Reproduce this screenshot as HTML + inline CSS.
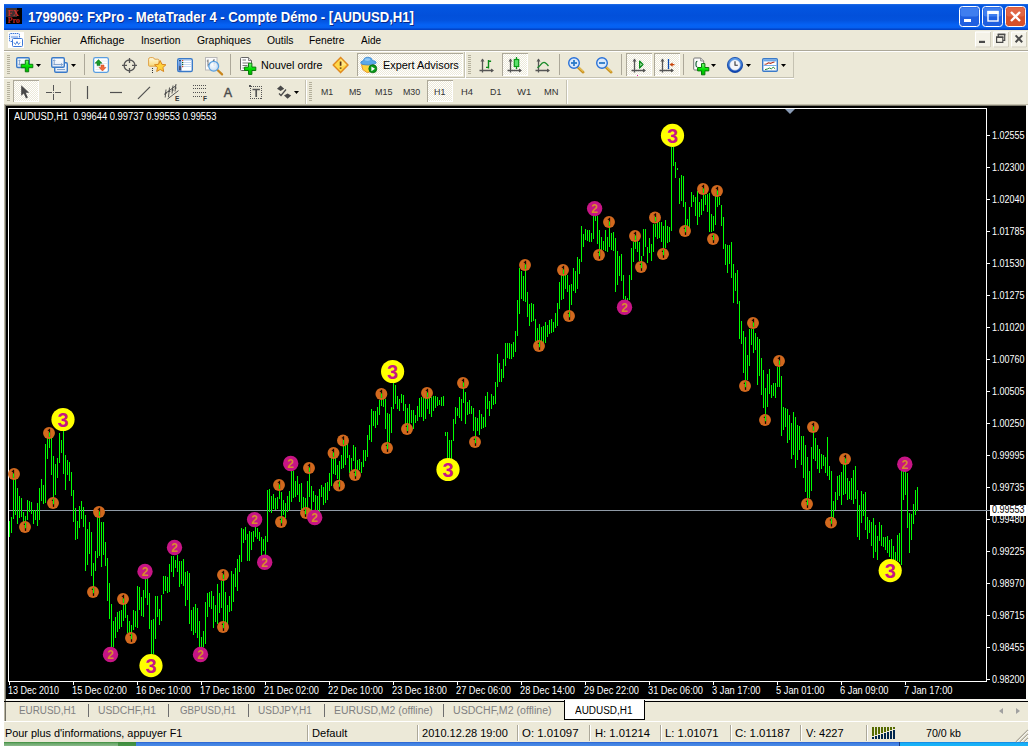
<!DOCTYPE html>
<html><head><meta charset="utf-8"><title>1799069: FxPro - MetaTrader 4</title>
<style>
html,body{margin:0;padding:0;background:#fff;}
body{width:1032px;height:746px;position:relative;overflow:hidden;font-family:"Liberation Sans",sans-serif;}
.a{position:absolute;white-space:nowrap;transform-origin:0 0;}
#win{left:4px;top:4px;width:1024px;height:738px;background:#ece9d8;}
#title{left:4px;top:4px;width:1024px;height:26px;background:linear-gradient(#2a75ea 0,#0a5ae0 1px,#0355e0 3px,#0250da 12px,#0352dd 16px,#0562f5 21px,#0560f0 23.5px,#0348d0 25px,#0240c0 26px);}
.tt{top:7.9px;font-size:14px;font-weight:bold;color:#fff;line-height:18px;text-shadow:1px 1px 0 #0a2a8a;}
.menu{top:32.5px;font-size:11px;color:#000;line-height:14px;}
.tb{font-size:11px;color:#000;line-height:14px;}
.tf{top:87px;font-size:9px;color:#333;line-height:11px;}
.cl{font-size:10px;color:#fff;line-height:10px;}
.tab{top:704px;font-size:10px;color:#808080;line-height:13px;}
.st{top:726px;font-size:11px;color:#000;line-height:14px;}
.pressed{background:conic-gradient(#fff 25%,#ece9d8 0 50%,#fff 0 75%,#ece9d8 0) 0 0/2px 2px;box-shadow:inset 1px 1px 0 #aca899,inset -1px -1px 0 #fff;}
</style></head><body>
<div class="a" id="win"></div>
<div class="a" id="title"></div>

<div class="a" style="left:4px;top:50px;width:1024px;height:1px;background:#aca899"></div>
<div class="a" style="left:4px;top:51px;width:1024px;height:1px;background:#fff"></div>
<div class="a" style="left:4px;top:77px;width:790px;height:1px;background:#c5c2b2"></div>
<div class="a" style="left:4px;top:78px;width:790px;height:1px;background:#fff"></div>
<div class="a" style="left:793px;top:52px;width:1px;height:26px;background:#c5c2b2"></div>
<div class="a" style="left:464px;top:52px;width:1px;height:26px;background:#c5c2b2"></div>
<div class="a" style="left:465px;top:52px;width:1px;height:26px;background:#fff"></div>
<div class="a" style="left:305px;top:80px;width:1px;height:24px;background:#c5c2b2"></div>
<div class="a" style="left:306px;top:80px;width:1px;height:24px;background:#fff"></div>
<div class="a" style="left:566px;top:80px;width:1px;height:24px;background:#c5c2b2"></div>
<div class="a" style="left:567px;top:80px;width:1px;height:24px;background:#fff"></div>
<div class="a" style="left:4px;top:104px;width:1024px;height:1px;background:#c4c0ae"></div>
<div class="a" style="left:5px;top:105px;width:1023px;height:1px;background:#7d7a6c"></div>
<div class="a pressed" style="left:13px;top:80px;width:26px;height:22px"></div>
<div class="a pressed" style="left:357px;top:53px;width:106px;height:23px"></div>
<div class="a pressed" style="left:502px;top:53px;width:26px;height:23px"></div>
<div class="a pressed" style="left:626px;top:53px;width:26px;height:23px"></div>
<div class="a pressed" style="left:654px;top:53px;width:26px;height:23px"></div>
<div class="a pressed" style="left:427px;top:80px;width:26px;height:22px"></div>
<div class="a" style="left:6px;top:106px;width:1020px;height:593px;background:#000"></div>
<div class="a" style="left:4px;top:104px;width:1px;height:617px;background:#bab6a4"></div>
<div class="a" style="left:5px;top:105px;width:1px;height:616px;background:#716f64"></div>
<div class="a" style="left:1026px;top:105px;width:2px;height:596px;background:#fdfdfb"></div>
<div class="a" style="left:990px;top:505px;width:36px;height:11px;background:#fff"></div>
<svg class="a" style="left:0;top:0" width="1032" height="746" viewBox="0 0 1032 746">
<g shape-rendering="crispEdges" fill="none" stroke="#fff" stroke-width="1">
<path d="M8.5 682 V108.5 H986.5 V682 M8 681.5 H987"/>
<path d="M987 135.5H990M987 167.5H990M987 199.5H990M987 231.5H990M987 263.5H990M987 295.5H990M987 327.5H990M987 359.5H990M987 391.5H990M987 423.5H990M987 455.5H990M987 487.5H990M987 519.5H990M987 551.5H990M987 583.5H990M987 615.5H990M987 647.5H990M987 679.5H990M9.5 682V685M73.5 682V685M137.5 682V685M201.5 682V685M265.5 682V685M329.5 682V685M393.5 682V685M457.5 682V685M521.5 682V685M585.5 682V685M649.5 682V685M713.5 682V685M777.5 682V685M841.5 682V685M905.5 682V685"/>
</g>
<path d="M9 510.5H990" stroke="#8f9aa6" stroke-width="1" shape-rendering="crispEdges"/>
<path d="M785 109H795L790 114Z" fill="#8a9bb5"/>
<path d="M9.5 521V537M11.5 517V533M13.5 474V519M15.5 479V515M17.5 488V524M19.5 496V518M21.5 498V517M23.5 512V524M25.5 516V528M27.5 500V520M29.5 501V512M31.5 502V514M33.5 510V524M35.5 510V520M37.5 503V526M39.5 488V520M41.5 479V501M43.5 485V504M45.5 444V503M47.5 433V459M49.5 433V448M51.5 438V475M53.5 456V504M55.5 464V495M57.5 458V478M59.5 433V463M61.5 440V453M63.5 431V474M65.5 455V490M67.5 460V475M69.5 462V481M71.5 472V496M73.5 490V522M75.5 508V540M77.5 521V539M79.5 506V528M81.5 501V519M83.5 507V527M85.5 515V571M87.5 529V565M89.5 522V554M91.5 532V576M93.5 563V587M95.5 551V571M97.5 517V558M99.5 512V556M101.5 522V567M103.5 522V555M105.5 542V566M107.5 558V601M109.5 583V619M111.5 604V647M113.5 621V647M115.5 617V638M117.5 612V632M119.5 611V629M121.5 610V627M123.5 604V621M125.5 604V618M127.5 615V633M129.5 621V633M131.5 625V638M133.5 610V630M135.5 611V627M137.5 586V628M139.5 587V610M141.5 597V616M143.5 590V617M145.5 578V598M147.5 578V605M149.5 593V629M151.5 620V654M153.5 619V654M155.5 596V639M157.5 596V617M159.5 609V625M161.5 595V621M163.5 576V594M165.5 576V591M167.5 577V593M169.5 564V592M171.5 556V572M173.5 556V577M175.5 560V568M177.5 555V572M179.5 561V587M181.5 561V584M183.5 559V586M185.5 572V606M187.5 571V600M189.5 573V624M191.5 610V631M193.5 607V635M195.5 604V633M197.5 608V638M199.5 621V647M201.5 637V647M203.5 631V647M205.5 602V644M207.5 593V617M209.5 592V607M211.5 591V609M213.5 596V628M215.5 605V622M217.5 584V624M219.5 593V613M221.5 581V608M223.5 575V627M225.5 592V624M227.5 605V624M229.5 596V612M231.5 571V611M233.5 574V602M235.5 568V587M237.5 559V591M239.5 555V572M241.5 528V562M243.5 529V543M245.5 527V540M247.5 534V561M249.5 531V561M251.5 532V550M253.5 531V542M255.5 527V537M257.5 528V539M259.5 532V541M261.5 537V556M263.5 539V551M265.5 536V556M267.5 490V542M269.5 489V512M271.5 496V513M273.5 494V509M275.5 498V510M277.5 497V509M279.5 491V499M281.5 492V520M283.5 500V515M285.5 503V518M287.5 496V512M289.5 491V510M291.5 471V502M293.5 471V498M295.5 481V497M297.5 476V495M299.5 484V502M301.5 483V510M303.5 497V510M305.5 498V507M307.5 481V510M309.5 473V497M311.5 486V510M313.5 491V502M315.5 495V510M317.5 496V512M319.5 489V512M321.5 485V497M323.5 487V505M325.5 483V503M327.5 482V500M329.5 473V491M331.5 456V486M333.5 456V474M335.5 458V475M337.5 465V479M339.5 461V480M341.5 455V469M343.5 441V468M345.5 446V465M347.5 444V458M349.5 455V473M351.5 458V470M353.5 445V461M355.5 447V472M357.5 460V472M359.5 459V470M361.5 462V473M363.5 450V467M365.5 450V461M367.5 435V457M369.5 425V440M371.5 409V442M373.5 411V426M375.5 411V428M377.5 407V425M379.5 400V415M381.5 394V406M383.5 399V407M385.5 399V429M387.5 413V448M389.5 414V442M391.5 407V433M393.5 383V409M395.5 385V404M397.5 396V409M399.5 399V411M401.5 394V403M403.5 395V411M405.5 404V429M407.5 408V431M409.5 404V425M411.5 410V423M413.5 410V429M415.5 415V423M417.5 406V421M419.5 398V417M421.5 397V417M423.5 398V421M425.5 397V419M427.5 399V409M429.5 398V414M431.5 397V417M433.5 396V411M435.5 396V408M437.5 397V406M439.5 400V405M441.5 397V406M443.5 396V406M445.5 432V436M447.5 432V459M449.5 440V459M451.5 440V459M453.5 419V441M455.5 407V424M457.5 408V416M459.5 397V418M461.5 399V421M463.5 383V403M465.5 392V424M467.5 402V415M469.5 400V414M471.5 406V414M473.5 408V431M475.5 417V436M477.5 418V431M479.5 410V435M481.5 414V429M483.5 417V428M485.5 396V427M487.5 392V409M489.5 401V416M491.5 394V409M493.5 396V405M495.5 382V404M497.5 354V387M499.5 363V382M501.5 369V382M503.5 359V378M505.5 343V366M507.5 343V358M509.5 343V359M511.5 344V359M513.5 342V357M515.5 331V352M517.5 300V336M519.5 268V314M521.5 271V299M523.5 276V301M525.5 266V302M527.5 292V317M529.5 304V326M531.5 303V322M533.5 304V321M535.5 319V341M537.5 328V341M539.5 324V342M541.5 327V343M543.5 326V343M545.5 322V343M547.5 325V337M549.5 320V334M551.5 319V333M553.5 322V332M555.5 313V328M557.5 303V326M559.5 282V309M561.5 275V300M563.5 274V299M565.5 275V289M567.5 275V292M569.5 285V311M571.5 284V305M573.5 268V291M575.5 271V293M577.5 257V289M579.5 259V274M581.5 226V262M583.5 234V247M585.5 229V240M587.5 230V241M589.5 230V242M591.5 233V242M593.5 216V239M595.5 216V221M597.5 216V244M599.5 230V249M601.5 237V254M603.5 241V250M605.5 230V251M607.5 237V252M609.5 227V247M611.5 233V250M613.5 232V251M615.5 238V292M617.5 251V285M619.5 256V276M621.5 254V281M623.5 275V299M625.5 296V300M627.5 298V301M629.5 275V300M631.5 248V280M633.5 242V262M635.5 241V249M637.5 241V252M639.5 242V261M641.5 256V262M643.5 229V256M645.5 229V247M647.5 247V263M649.5 238V253M651.5 244V261M653.5 224V252M655.5 224V237M657.5 222V239M659.5 222V238M661.5 222V242M663.5 226V249M665.5 220V248M667.5 226V243M669.5 227V242M671.5 147V231M673.5 147V166M675.5 162V178M677.5 168V170M679.5 178V204M681.5 175V201M683.5 176V207M685.5 202V231M687.5 219V231M689.5 207V231M691.5 192V207M693.5 195V202M695.5 197V216M697.5 191V225M699.5 202V217M701.5 199V215M703.5 195V211M705.5 195V205M707.5 194V212M709.5 193V232M711.5 214V232M713.5 216V231M715.5 196V225M717.5 196V207M719.5 197V205M721.5 205V226M723.5 217V249M725.5 244V265M727.5 245V273M729.5 245V264M731.5 242V278M733.5 264V303M735.5 273V291M737.5 270V304M739.5 301V339M741.5 321V344M743.5 331V373M745.5 337V380M747.5 355V380M749.5 329V366M751.5 329V345M753.5 329V353M755.5 333V350M757.5 337V385M759.5 339V376M761.5 358V395M763.5 370V408M765.5 388V414M767.5 374V407M769.5 369V394M771.5 385V398M773.5 383V396M775.5 383V398M777.5 367V387M779.5 366V387M781.5 376V436M783.5 407V430M785.5 408V427M787.5 409V443M789.5 415V440M791.5 423V459M793.5 412V455M795.5 417V468M797.5 425V460M799.5 426V450M801.5 436V465M803.5 436V478M805.5 445V492M807.5 457V498M809.5 471V498M811.5 447V491M813.5 431V459M815.5 438V461M817.5 445V469M819.5 449V473M821.5 454V469M823.5 455V466M825.5 457V473M827.5 437V476M829.5 466V480M831.5 471V518M833.5 501V518M835.5 492V510M837.5 476V500M839.5 475V496M841.5 472V505M843.5 464V495M845.5 464V494M847.5 478V500M849.5 481V499M851.5 478V500M853.5 470V504M855.5 466V499M857.5 490V537M859.5 505V540M861.5 491V523M863.5 494V516M865.5 492V530M867.5 517V539M869.5 520V533M871.5 522V546M873.5 518V558M875.5 525V552M877.5 536V560M879.5 522V541M881.5 525V546M883.5 537V547M885.5 537V550M887.5 536V553M889.5 540V557M891.5 539V560M893.5 546V560M895.5 552V560M897.5 535V561M899.5 533V562M901.5 471V565M903.5 471V500M905.5 471V495M907.5 473V528M909.5 513V553M911.5 514V540M913.5 504V524M915.5 490V515M917.5 487V511" stroke="#00ff00" stroke-width="1" fill="none" shape-rendering="crispEdges"/>
<circle cx="14" cy="474" r="5.95" fill="#d2691e"/><rect x="12.85" y="469.8" width="1.3" height="8.1" fill="#160800"/><rect x="11.8" y="470.8" width="1.2" height="1.1" fill="#160800"/><rect x="13" y="473.4" width="1" height="4.5" fill="#00ff00"/>
<circle cx="25" cy="527" r="5.95" fill="#d2691e"/><rect x="24.85" y="522.8" width="1.3" height="8.1" fill="#160800"/><rect x="23.8" y="523.8" width="1.2" height="1.1" fill="#160800"/><rect x="25" y="522.8" width="1" height="5.4" fill="#00ff00"/>
<circle cx="49" cy="433" r="5.95" fill="#d2691e"/><rect x="48.85" y="428.8" width="1.3" height="8.1" fill="#160800"/><rect x="47.8" y="429.8" width="1.2" height="1.1" fill="#160800"/><rect x="49" y="432.4" width="1" height="4.5" fill="#00ff00"/>
<circle cx="53" cy="503" r="5.95" fill="#d2691e"/><rect x="52.85" y="498.8" width="1.3" height="8.1" fill="#160800"/><rect x="51.8" y="499.8" width="1.2" height="1.1" fill="#160800"/><rect x="53" y="498.8" width="1" height="5.4" fill="#00ff00"/>
<circle cx="99" cy="512" r="5.95" fill="#d2691e"/><rect x="98.85" y="507.8" width="1.3" height="8.1" fill="#160800"/><rect x="97.8" y="508.8" width="1.2" height="1.1" fill="#160800"/><rect x="99" y="511.4" width="1" height="4.5" fill="#00ff00"/>
<circle cx="93" cy="592" r="5.95" fill="#d2691e"/><rect x="92.85" y="587.8" width="1.3" height="8.1" fill="#160800"/><rect x="91.8" y="588.8" width="1.2" height="1.1" fill="#160800"/><rect x="93" y="587.8" width="1" height="5.4" fill="#00ff00"/>
<circle cx="123" cy="599" r="5.95" fill="#d2691e"/><rect x="122.85" y="594.8" width="1.3" height="8.1" fill="#160800"/><rect x="121.8" y="595.8" width="1.2" height="1.1" fill="#160800"/><rect x="123" y="598.4" width="1" height="4.5" fill="#00ff00"/>
<circle cx="131" cy="638" r="5.95" fill="#d2691e"/><rect x="130.85" y="633.8" width="1.3" height="8.1" fill="#160800"/><rect x="129.8" y="634.8" width="1.2" height="1.1" fill="#160800"/><rect x="131" y="633.8" width="1" height="5.4" fill="#00ff00"/>
<circle cx="223" cy="575" r="5.95" fill="#d2691e"/><rect x="222.85" y="570.8" width="1.3" height="8.1" fill="#160800"/><rect x="221.8" y="571.8" width="1.2" height="1.1" fill="#160800"/><rect x="223" y="574.4" width="1" height="4.5" fill="#00ff00"/>
<circle cx="223" cy="627" r="5.95" fill="#d2691e"/><rect x="222.85" y="622.8" width="1.3" height="8.1" fill="#160800"/><rect x="221.8" y="623.8" width="1.2" height="1.1" fill="#160800"/><rect x="223" y="622.8" width="1" height="5.4" fill="#00ff00"/>
<circle cx="279" cy="485" r="5.95" fill="#d2691e"/><rect x="278.85" y="480.8" width="1.3" height="8.1" fill="#160800"/><rect x="277.8" y="481.8" width="1.2" height="1.1" fill="#160800"/><rect x="279" y="484.4" width="1" height="4.5" fill="#00ff00"/>
<circle cx="281" cy="522" r="5.95" fill="#d2691e"/><rect x="280.85" y="517.8" width="1.3" height="8.1" fill="#160800"/><rect x="279.8" y="518.8" width="1.2" height="1.1" fill="#160800"/><rect x="281" y="517.8" width="1" height="5.4" fill="#00ff00"/>
<circle cx="309" cy="468" r="5.95" fill="#d2691e"/><rect x="308.85" y="463.8" width="1.3" height="8.1" fill="#160800"/><rect x="307.8" y="464.8" width="1.2" height="1.1" fill="#160800"/><rect x="309" y="467.4" width="1" height="4.5" fill="#00ff00"/>
<circle cx="306" cy="513" r="5.95" fill="#d2691e"/><rect x="304.85" y="508.8" width="1.3" height="8.1" fill="#160800"/><rect x="303.8" y="509.8" width="1.2" height="1.1" fill="#160800"/><rect x="305" y="508.8" width="1" height="5.4" fill="#00ff00"/>
<circle cx="333.5" cy="453" r="5.95" fill="#d2691e"/><rect x="332.85" y="448.8" width="1.3" height="8.1" fill="#160800"/><rect x="331.8" y="449.8" width="1.2" height="1.1" fill="#160800"/><rect x="333" y="452.4" width="1" height="4.5" fill="#00ff00"/>
<circle cx="339" cy="485.6" r="5.95" fill="#d2691e"/><rect x="338.85" y="481.4" width="1.3" height="8.1" fill="#160800"/><rect x="337.8" y="482.4" width="1.2" height="1.1" fill="#160800"/><rect x="339" y="481.4" width="1" height="5.4" fill="#00ff00"/>
<circle cx="343" cy="440.5" r="5.95" fill="#d2691e"/><rect x="342.85" y="436.3" width="1.3" height="8.1" fill="#160800"/><rect x="341.8" y="437.3" width="1.2" height="1.1" fill="#160800"/><rect x="343" y="439.9" width="1" height="4.5" fill="#00ff00"/>
<circle cx="355" cy="475" r="5.95" fill="#d2691e"/><rect x="354.85" y="470.8" width="1.3" height="8.1" fill="#160800"/><rect x="353.8" y="471.8" width="1.2" height="1.1" fill="#160800"/><rect x="355" y="470.8" width="1" height="5.4" fill="#00ff00"/>
<circle cx="381.4" cy="394" r="5.95" fill="#d2691e"/><rect x="380.85" y="389.8" width="1.3" height="8.1" fill="#160800"/><rect x="379.8" y="390.8" width="1.2" height="1.1" fill="#160800"/><rect x="381" y="393.4" width="1" height="4.5" fill="#00ff00"/>
<circle cx="387" cy="448" r="5.95" fill="#d2691e"/><rect x="386.85" y="443.8" width="1.3" height="8.1" fill="#160800"/><rect x="385.8" y="444.8" width="1.2" height="1.1" fill="#160800"/><rect x="387" y="443.8" width="1" height="5.4" fill="#00ff00"/>
<circle cx="407" cy="429" r="5.95" fill="#d2691e"/><rect x="406.85" y="424.8" width="1.3" height="8.1" fill="#160800"/><rect x="405.8" y="425.8" width="1.2" height="1.1" fill="#160800"/><rect x="407" y="424.8" width="1" height="6.2" fill="#00ff00"/>
<circle cx="427" cy="393" r="5.95" fill="#d2691e"/><rect x="426.85" y="388.8" width="1.3" height="8.1" fill="#160800"/><rect x="425.8" y="389.8" width="1.2" height="1.1" fill="#160800"/><rect x="427" y="392.4" width="1" height="4.5" fill="#00ff00"/>
<circle cx="463" cy="383" r="5.95" fill="#d2691e"/><rect x="462.85" y="378.8" width="1.3" height="8.1" fill="#160800"/><rect x="461.8" y="379.8" width="1.2" height="1.1" fill="#160800"/><rect x="463" y="382.4" width="1" height="4.5" fill="#00ff00"/>
<circle cx="475" cy="442" r="5.95" fill="#d2691e"/><rect x="474.85" y="437.8" width="1.3" height="8.1" fill="#160800"/><rect x="473.8" y="438.8" width="1.2" height="1.1" fill="#160800"/><rect x="475" y="437.8" width="1" height="5.4" fill="#00ff00"/>
<circle cx="525" cy="265" r="5.95" fill="#d2691e"/><rect x="524.85" y="260.8" width="1.3" height="8.1" fill="#160800"/><rect x="523.8" y="261.8" width="1.2" height="1.1" fill="#160800"/><rect x="525" y="264.4" width="1" height="4.5" fill="#00ff00"/>
<circle cx="539" cy="346" r="5.95" fill="#d2691e"/><rect x="538.85" y="341.8" width="1.3" height="8.1" fill="#160800"/><rect x="537.8" y="342.8" width="1.2" height="1.1" fill="#160800"/><rect x="539" y="341.8" width="1" height="5.4" fill="#00ff00"/>
<circle cx="563" cy="270" r="5.95" fill="#d2691e"/><rect x="562.85" y="265.8" width="1.3" height="8.1" fill="#160800"/><rect x="561.8" y="266.8" width="1.2" height="1.1" fill="#160800"/><rect x="563" y="269.4" width="1" height="4.5" fill="#00ff00"/>
<circle cx="569" cy="316" r="5.95" fill="#d2691e"/><rect x="568.85" y="311.8" width="1.3" height="8.1" fill="#160800"/><rect x="567.8" y="312.8" width="1.2" height="1.1" fill="#160800"/><rect x="569" y="311.8" width="1" height="5.4" fill="#00ff00"/>
<circle cx="599" cy="255" r="5.95" fill="#d2691e"/><rect x="598.85" y="250.8" width="1.3" height="8.1" fill="#160800"/><rect x="597.8" y="251.8" width="1.2" height="1.1" fill="#160800"/><rect x="599" y="250.8" width="1" height="5.4" fill="#00ff00"/>
<circle cx="609" cy="222" r="5.95" fill="#d2691e"/><rect x="608.85" y="217.8" width="1.3" height="8.1" fill="#160800"/><rect x="607.8" y="218.8" width="1.2" height="1.1" fill="#160800"/><rect x="609" y="221.4" width="1" height="4.5" fill="#00ff00"/>
<circle cx="635" cy="236" r="5.95" fill="#d2691e"/><rect x="634.85" y="231.8" width="1.3" height="8.1" fill="#160800"/><rect x="633.8" y="232.8" width="1.2" height="1.1" fill="#160800"/><rect x="635" y="235.4" width="1" height="4.5" fill="#00ff00"/>
<circle cx="641" cy="267" r="5.95" fill="#d2691e"/><rect x="640.85" y="262.8" width="1.3" height="8.1" fill="#160800"/><rect x="639.8" y="263.8" width="1.2" height="1.1" fill="#160800"/><rect x="641" y="262.8" width="1" height="5.4" fill="#00ff00"/>
<circle cx="655" cy="217.5" r="5.95" fill="#d2691e"/><rect x="654.85" y="213.3" width="1.3" height="8.1" fill="#160800"/><rect x="653.8" y="214.3" width="1.2" height="1.1" fill="#160800"/><rect x="655" y="216.9" width="1" height="4.5" fill="#00ff00"/>
<circle cx="663" cy="254" r="5.95" fill="#d2691e"/><rect x="662.85" y="249.8" width="1.3" height="8.1" fill="#160800"/><rect x="661.8" y="250.8" width="1.2" height="1.1" fill="#160800"/><rect x="663" y="249.8" width="1" height="5.4" fill="#00ff00"/>
<circle cx="685" cy="231" r="5.95" fill="#d2691e"/><rect x="684.85" y="226.8" width="1.3" height="8.1" fill="#160800"/><rect x="683.8" y="227.8" width="1.2" height="1.1" fill="#160800"/><rect x="685" y="226.8" width="1" height="5.4" fill="#00ff00"/>
<circle cx="703" cy="189" r="5.95" fill="#d2691e"/><rect x="702.85" y="184.8" width="1.3" height="8.1" fill="#160800"/><rect x="701.8" y="185.8" width="1.2" height="1.1" fill="#160800"/><rect x="703" y="188.4" width="1" height="4.5" fill="#00ff00"/>
<circle cx="717" cy="191" r="5.95" fill="#d2691e"/><rect x="716.85" y="186.8" width="1.3" height="8.1" fill="#160800"/><rect x="715.8" y="187.8" width="1.2" height="1.1" fill="#160800"/><rect x="717" y="190.4" width="1" height="4.5" fill="#00ff00"/>
<circle cx="713" cy="239" r="5.95" fill="#d2691e"/><rect x="712.85" y="234.8" width="1.3" height="8.1" fill="#160800"/><rect x="711.8" y="235.8" width="1.2" height="1.1" fill="#160800"/><rect x="713" y="234.8" width="1" height="5.4" fill="#00ff00"/>
<circle cx="745" cy="386" r="5.95" fill="#d2691e"/><rect x="744.85" y="381.8" width="1.3" height="8.1" fill="#160800"/><rect x="743.8" y="382.8" width="1.2" height="1.1" fill="#160800"/><rect x="745" y="381.8" width="1" height="5.4" fill="#00ff00"/>
<circle cx="753" cy="323" r="5.95" fill="#d2691e"/><rect x="752.85" y="318.8" width="1.3" height="8.1" fill="#160800"/><rect x="751.8" y="319.8" width="1.2" height="1.1" fill="#160800"/><rect x="753" y="322.4" width="1" height="4.5" fill="#00ff00"/>
<circle cx="779" cy="361" r="5.95" fill="#d2691e"/><rect x="778.85" y="356.8" width="1.3" height="8.1" fill="#160800"/><rect x="777.8" y="357.8" width="1.2" height="1.1" fill="#160800"/><rect x="779" y="360.4" width="1" height="4.5" fill="#00ff00"/>
<circle cx="765" cy="420" r="5.95" fill="#d2691e"/><rect x="764.85" y="415.8" width="1.3" height="8.1" fill="#160800"/><rect x="763.8" y="416.8" width="1.2" height="1.1" fill="#160800"/><rect x="765" y="415.8" width="1" height="5.4" fill="#00ff00"/>
<circle cx="813" cy="427" r="5.95" fill="#d2691e"/><rect x="812.85" y="422.8" width="1.3" height="8.1" fill="#160800"/><rect x="811.8" y="423.8" width="1.2" height="1.1" fill="#160800"/><rect x="813" y="426.4" width="1" height="4.5" fill="#00ff00"/>
<circle cx="807" cy="504" r="5.95" fill="#d2691e"/><rect x="806.85" y="499.8" width="1.3" height="8.1" fill="#160800"/><rect x="805.8" y="500.8" width="1.2" height="1.1" fill="#160800"/><rect x="807" y="499.8" width="1" height="5.4" fill="#00ff00"/>
<circle cx="831" cy="522.6" r="5.95" fill="#d2691e"/><rect x="830.85" y="518.4" width="1.3" height="8.1" fill="#160800"/><rect x="829.8" y="519.4" width="1.2" height="1.1" fill="#160800"/><rect x="831" y="518.4" width="1" height="5.4" fill="#00ff00"/>
<circle cx="845" cy="459" r="5.95" fill="#d2691e"/><rect x="844.85" y="454.8" width="1.3" height="8.1" fill="#160800"/><rect x="843.8" y="455.8" width="1.2" height="1.1" fill="#160800"/><rect x="845" y="458.4" width="1" height="4.5" fill="#00ff00"/>
<circle cx="110.5" cy="654.5" r="7.7" fill="#c71585"/><text x="110.5" y="658.7" font-family="Liberation Sans" font-size="12" font-weight="bold" text-anchor="middle" fill="#d98a2e">2</text>
<circle cx="145" cy="571.5" r="7.7" fill="#c71585"/><text x="145" y="575.7" font-family="Liberation Sans" font-size="12" font-weight="bold" text-anchor="middle" fill="#d98a2e">2</text>
<circle cx="174.5" cy="547.5" r="7.7" fill="#c71585"/><text x="174.5" y="551.7" font-family="Liberation Sans" font-size="12" font-weight="bold" text-anchor="middle" fill="#d98a2e">2</text>
<circle cx="200.5" cy="654.5" r="7.7" fill="#c71585"/><text x="200.5" y="658.7" font-family="Liberation Sans" font-size="12" font-weight="bold" text-anchor="middle" fill="#d98a2e">2</text>
<circle cx="254.6" cy="519.6" r="7.7" fill="#c71585"/><text x="254.6" y="523.8000000000001" font-family="Liberation Sans" font-size="12" font-weight="bold" text-anchor="middle" fill="#d98a2e">2</text>
<circle cx="264.7" cy="562.3" r="7.7" fill="#c71585"/><text x="264.7" y="566.5" font-family="Liberation Sans" font-size="12" font-weight="bold" text-anchor="middle" fill="#d98a2e">2</text>
<circle cx="290.7" cy="463.5" r="7.7" fill="#c71585"/><text x="290.7" y="467.7" font-family="Liberation Sans" font-size="12" font-weight="bold" text-anchor="middle" fill="#d98a2e">2</text>
<circle cx="314.7" cy="517.5" r="7.7" fill="#c71585"/><text x="314.7" y="521.7" font-family="Liberation Sans" font-size="12" font-weight="bold" text-anchor="middle" fill="#d98a2e">2</text>
<circle cx="594.6" cy="208.6" r="7.7" fill="#c71585"/><text x="594.6" y="212.79999999999998" font-family="Liberation Sans" font-size="12" font-weight="bold" text-anchor="middle" fill="#d98a2e">2</text>
<circle cx="624.5" cy="307.3" r="7.7" fill="#c71585"/><text x="624.5" y="311.5" font-family="Liberation Sans" font-size="12" font-weight="bold" text-anchor="middle" fill="#d98a2e">2</text>
<circle cx="904.8" cy="464.3" r="7.7" fill="#c71585"/><text x="904.8" y="468.5" font-family="Liberation Sans" font-size="12" font-weight="bold" text-anchor="middle" fill="#d98a2e">2</text>
<circle cx="63" cy="419.5" r="11.6" fill="#ffff00"/><text x="63" y="426.8" font-family="Liberation Sans" font-size="20" font-weight="bold" text-anchor="middle" fill="#c71585">3</text>
<circle cx="151" cy="665.6" r="11.6" fill="#ffff00"/><text x="151" y="672.9" font-family="Liberation Sans" font-size="20" font-weight="bold" text-anchor="middle" fill="#c71585">3</text>
<circle cx="392.6" cy="371.5" r="11.6" fill="#ffff00"/><text x="392.6" y="378.8" font-family="Liberation Sans" font-size="20" font-weight="bold" text-anchor="middle" fill="#c71585">3</text>
<circle cx="448" cy="469.5" r="11.6" fill="#ffff00"/><text x="448" y="476.8" font-family="Liberation Sans" font-size="20" font-weight="bold" text-anchor="middle" fill="#c71585">3</text>
<circle cx="672.5" cy="135.4" r="11.6" fill="#ffff00"/><text x="672.5" y="142.70000000000002" font-family="Liberation Sans" font-size="20" font-weight="bold" text-anchor="middle" fill="#c71585">3</text>
<circle cx="890.2" cy="570.6" r="11.6" fill="#ffff00"/><text x="890.2" y="577.9" font-family="Liberation Sans" font-size="20" font-weight="bold" text-anchor="middle" fill="#c71585">3</text>
</svg>
<div class="a" style="left:6px;top:699px;width:1022px;height:2px;background:#f7f6f0"></div>
<div class="a" style="left:4px;top:701px;width:1024px;height:1px;background:#000"></div>
<div class="a" style="left:4px;top:721px;width:1024px;height:1px;background:#fff"></div>
<div class="a" style="left:88px;top:704px;width:1px;height:13px;background:#6e6e6e"></div>
<div class="a" style="left:168px;top:704px;width:1px;height:13px;background:#6e6e6e"></div>
<div class="a" style="left:248px;top:704px;width:1px;height:13px;background:#6e6e6e"></div>
<div class="a" style="left:324px;top:704px;width:1px;height:13px;background:#6e6e6e"></div>
<div class="a" style="left:443px;top:704px;width:1px;height:13px;background:#6e6e6e"></div>
<div class="a" style="left:564px;top:700px;width:81px;height:20px;background:#fff;border:1px solid #000;border-top:none;box-sizing:border-box"></div>
<div class="a" style="left:999px;top:707.5px;width:0;height:0;border:3.5px solid transparent;border-right:4px solid #a0a0a0;border-left:none"></div>
<div class="a" style="left:1016px;top:707.5px;width:0;height:0;border:3.5px solid transparent;border-left:4px solid #a0a0a0;border-right:none"></div>
<div class="a" style="left:307px;top:725px;width:1px;height:16px;background:#aca899"></div>
<div class="a" style="left:308px;top:725px;width:1px;height:16px;background:#fff"></div>
<div class="a" style="left:417px;top:725px;width:1px;height:16px;background:#aca899"></div>
<div class="a" style="left:418px;top:725px;width:1px;height:16px;background:#fff"></div>
<div class="a" style="left:517px;top:725px;width:1px;height:16px;background:#aca899"></div>
<div class="a" style="left:518px;top:725px;width:1px;height:16px;background:#fff"></div>
<div class="a" style="left:589px;top:725px;width:1px;height:16px;background:#aca899"></div>
<div class="a" style="left:590px;top:725px;width:1px;height:16px;background:#fff"></div>
<div class="a" style="left:660px;top:725px;width:1px;height:16px;background:#aca899"></div>
<div class="a" style="left:661px;top:725px;width:1px;height:16px;background:#fff"></div>
<div class="a" style="left:730px;top:725px;width:1px;height:16px;background:#aca899"></div>
<div class="a" style="left:731px;top:725px;width:1px;height:16px;background:#fff"></div>
<div class="a" style="left:800px;top:725px;width:1px;height:16px;background:#aca899"></div>
<div class="a" style="left:801px;top:725px;width:1px;height:16px;background:#fff"></div>
<div class="a" style="left:866px;top:725px;width:1px;height:16px;background:#aca899"></div>
<div class="a" style="left:867px;top:725px;width:1px;height:16px;background:#fff"></div>
<div class="a" style="left:4px;top:742px;width:1024px;height:4px;background:linear-gradient(#2a5fd0 0,#3f80e0 1.5px,#4a8ae6 4px)"></div>
<div class="a" style="left:900px;top:742px;width:128px;height:4px;background:linear-gradient(#1580e0 0,#18aef5 1.5px,#18b4f8 4px)"></div>
<div class="a" style="left:899px;top:742px;width:1px;height:4px;background:#1a3a80"></div>
<div class="a" style="left:4px;top:742px;width:132px;height:4px;background:linear-gradient(#3c8c3c 0,#6aa86a 1.5px,#8cb88c 4px)"></div>
<div class="a" style="left:118px;top:742px;width:18px;height:4px;background:linear-gradient(#3a8a3a 0,#4a964a 4px)"></div>
<svg class="a" style="left:0;top:0" width="1032" height="746" viewBox="0 0 1032 746">
<defs>
<linearGradient id="gp" x1="0" y1="0" x2="0" y2="1"><stop offset="0" stop-color="#7dff7d"/><stop offset=".5" stop-color="#00e000"/><stop offset="1" stop-color="#00b400"/></linearGradient>
<linearGradient id="gw" x1="0" y1="0" x2="0" y2="1"><stop offset="0" stop-color="#ffffff"/><stop offset="1" stop-color="#dfe8f5"/></linearGradient>
<linearGradient id="gf" x1="0" y1="0" x2="0" y2="1"><stop offset="0" stop-color="#fffbe0"/><stop offset="1" stop-color="#f8d878"/></linearGradient>
<radialGradient id="gl" cx=".4" cy=".35" r=".7"><stop offset="0" stop-color="#ffffff"/><stop offset="1" stop-color="#bcd8f5"/></radialGradient>
<linearGradient id="gb" x1="0" y1="0" x2="0" y2="1"><stop offset="0" stop-color="#5aa0f0"/><stop offset="1" stop-color="#0a3fb0"/></linearGradient>
<pattern id="chk" width="2" height="2" patternUnits="userSpaceOnUse"><rect width="2" height="2" fill="#fff"/><rect width="1" height="1" fill="#ece9d8"/><rect x="1" y="1" width="1" height="1" fill="#ece9d8"/></pattern>
</defs>
<path d="M7 55.5h3M7 57.5h3M7 59.5h3M7 61.5h3M7 63.5h3M7 65.5h3M7 67.5h3M7 69.5h3M7 71.5h3M7 73.5h3" stroke="#b4b09c" stroke-width="1" shape-rendering="crispEdges"/>
<path d="M468 55.5h3M468 57.5h3M468 59.5h3M468 61.5h3M468 63.5h3M468 65.5h3M468 67.5h3M468 69.5h3M468 71.5h3M468 73.5h3" stroke="#b4b09c" stroke-width="1" shape-rendering="crispEdges"/>
<path d="M7 82.5h3M7 84.5h3M7 86.5h3M7 88.5h3M7 90.5h3M7 92.5h3M7 94.5h3M7 96.5h3M7 98.5h3M7 100.5h3" stroke="#b4b09c" stroke-width="1" shape-rendering="crispEdges"/>
<path d="M309 82.5h3M309 84.5h3M309 86.5h3M309 88.5h3M309 90.5h3M309 92.5h3M309 94.5h3M309 96.5h3M309 98.5h3M309 100.5h3" stroke="#b4b09c" stroke-width="1" shape-rendering="crispEdges"/>
<path d="M84.5 54V75" stroke="#aca899" stroke-width="1" shape-rendering="crispEdges"/>
<path d="M230.5 54V75" stroke="#aca899" stroke-width="1" shape-rendering="crispEdges"/>
<path d="M559.5 54V75" stroke="#aca899" stroke-width="1" shape-rendering="crispEdges"/>
<path d="M621.5 54V75" stroke="#aca899" stroke-width="1" shape-rendering="crispEdges"/>
<path d="M683.5 54V75" stroke="#aca899" stroke-width="1" shape-rendering="crispEdges"/>
<path d="M70.5 81V102" stroke="#aca899" stroke-width="1" shape-rendering="crispEdges"/>
<rect x="6" y="8" width="16" height="16" fill="#000"/>
<rect x="6" y="8" width="11" height="9" fill="#5a4444" opacity=".7"/>
<text x="7.5" y="15.5" font-family="Liberation Serif" font-weight="bold" font-size="8.5" fill="#d03030">FX</text>
<text x="7.5" y="22.5" font-family="Liberation Serif" font-weight="bold" font-size="8" fill="#c02828">Pro</text>
<rect x="959.5" y="6.5" width="20" height="20" rx="3" fill="#1f5fe0" stroke="#fff" stroke-width="1"/>
<rect x="960.5" y="7.5" width="18" height="9" rx="2.5" fill="#4d8cf5" opacity=".7"/>
<rect x="982.5" y="6.5" width="20" height="20" rx="3" fill="#1f5fe0" stroke="#fff" stroke-width="1"/>
<rect x="983.5" y="7.5" width="18" height="9" rx="2.5" fill="#4d8cf5" opacity=".7"/>
<rect x="1005.5" y="6.5" width="20" height="20" rx="3" fill="#d6512a" stroke="#fff" stroke-width="1"/>
<rect x="1006.5" y="7.5" width="18" height="9" rx="2.5" fill="#e8775a" opacity=".6"/>
<rect x="964" y="19" width="7" height="3" fill="#fff"/>
<rect x="988" y="11.5" width="10" height="9.5" fill="none" stroke="#fff" stroke-width="1.4"/><rect x="987.5" y="11" width="11" height="3" fill="#fff"/>
<path d="M1011 12l9 9M1020 12l-9 9" stroke="#fff" stroke-width="2.3" fill="none"/>
<rect x="8" y="32" width="16" height="16" fill="#fff"/>
<rect x="9.5" y="33.5" width="10" height="8" rx="1" fill="#eef4ff" stroke="#3c78d8" stroke-width="1" stroke-dasharray="1.5 .6"/>
<rect x="12.5" y="38.5" width="10" height="8" rx="1" fill="#fff" stroke="#3c78d8" stroke-width="1"/>
<path d="M14 42.5l1.5 2l1.5 -3l1.5 3l1.5 -2" stroke="#3c78d8" stroke-width=".9" fill="none"/>
<path d="M11 37h7" stroke="#3c78d8" stroke-width=".8"/>
<rect x="975" y="31.5" width="16" height="16" fill="#f4f2e8"/><path d="M975.5 47.5V32H991" stroke="#fff" fill="none"/><path d="M975.5 47H990.5V32" stroke="#d2cebe" fill="none"/>
<rect x="993" y="31.5" width="16" height="16" fill="#f4f2e8"/><path d="M993.5 47.5V32H1009" stroke="#fff" fill="none"/><path d="M993.5 47H1008.5V32" stroke="#d2cebe" fill="none"/>
<rect x="1011" y="31.5" width="16" height="16" fill="#f4f2e8"/><path d="M1011.5 47.5V32H1027" stroke="#fff" fill="none"/><path d="M1011.5 47H1026.5V32" stroke="#d2cebe" fill="none"/>
<rect x="979" y="40.8" width="6" height="2.2" fill="#4a4a4a"/>
<path d="M998.3 36.6v-2.2h6.4v6h-2M996.6 37.2h6.2v5.2h-6.2z" stroke="#4a4a4a" stroke-width="1.2" fill="none"/><path d="M996 37.3h7.4M997.7 34.6h7.6" stroke="#4a4a4a" stroke-width="1.5"/>
<path d="M1015.6 35.4l6.6 6.8M1022.2 35.4l-6.6 6.8" stroke="#4a4a4a" stroke-width="2" fill="none"/>
<rect x="16.7" y="57.7" width="12.6" height="9.8" rx="1.2" fill="url(#gw)" stroke="#3a7ac8" stroke-width="1.4"/>
<path d="M19.5 60v5M18.3 61.2l1.2 -1.4l1.2 1.4M18.3 63.8l1.2 1.4l1.2 -1.4" stroke="#7a9cc8" stroke-width=".8" fill="none"/>
<path d="M25.3 60.2h3.4v4.1h4.1v3.4h-4.1v4.1h-3.4v-4.1h-4.1v-3.4h4.1z" fill="url(#gp)" stroke="#0a7a0a" stroke-width="1"/>
<path d="M36 64h5l-2.5 3z" fill="#000"/>
<rect x="54.7" y="62.7" width="12.6" height="9.6" rx="1.2" fill="url(#gw)" stroke="#3a7ac8" stroke-width="1.4"/>
<path d="M57 69.5h8" stroke="#7a9cc8" stroke-width=".9"/>
<rect x="51.7" y="57.7" width="12.6" height="9.6" rx="1.2" fill="url(#gw)" stroke="#3a7ac8" stroke-width="1.4"/>
<path d="M54.2 60v4.5M53.5 64.5h9M53 61l1.2 -1.3l1.2 1.3M61 63.3l1.5 1.2l-1.5 1.2" stroke="#7a9cc8" stroke-width=".9" fill="none"/>
<path d="M71 64h5l-2.5 3z" fill="#000"/>
<rect x="93.6" y="57.6" width="14.8" height="14.8" rx="1.8" fill="#fff" stroke="#5a9ee0" stroke-width="1.3"/>
<path d="M101 61h6M101 63.5h6M95.5 67h5M95.5 69.5h5" stroke="#dde4ee" stroke-width=".8"/>
<path d="M98.5 59.6l3.5 3.6h-2v2.4h-3v-2.4h-2z" fill="#1a9a2a" stroke="#0a6a1a" stroke-width=".5"/>
<path d="M102.5 71l3.5 -3.6h-2v-2.4h-3v2.4h-2z" fill="#f06a3a" stroke="#c8401a" stroke-width=".5"/>
<circle cx="129.5" cy="65.4" r="5.4" fill="none" stroke="#555" stroke-width="1.3"/>
<path d="M129.5 58v5M129.5 68v5M122 65.4h5M132 65.4h5" stroke="#555" stroke-width="1.3"/>
<path d="M148.6 59.2q0 -1.6 1.6 -1.6h2.6q1.2 0 1.8 1.6h3.2q1.2 0 1.2 1.2v5q0 .8 -.8 .8h-8.8q-.8 0 -.8 -.8z" fill="url(#gf)" stroke="#dc9a3a" stroke-width=".9"/>
<path d="M160.2 60.6l1.7 3.7l4 .5l-3 2.7l.8 4l-3.5 -2l-3.5 2l.8 -4l-3 -2.7l4 -.5z" fill="#ffd23c" stroke="#d8861e" stroke-width="1"/>
<rect x="152" y="68" width="1" height="1" fill="#333"/><rect x="152" y="70" width="1" height="1" fill="#333"/><rect x="152" y="72" width="1" height="1" fill="#333"/>
<rect x="177.7" y="58.7" width="14.6" height="12.8" rx="1.6" fill="#fff" stroke="#3a7ac8" stroke-width="1.4"/>
<rect x="178.5" y="59.5" width="3" height="11.2" fill="url(#gb)" opacity=".8"/>
<path d="M183 60.5h8M183 62.5h8M183 64.5h8M183 66.5h8" stroke="#bcd0f0" stroke-width=".8"/>
<rect x="182" y="60" width="1.2" height="1.2" fill="#e0401a"/><rect x="182" y="62" width="1.2" height="1.2" fill="#0a5a2a"/><rect x="182" y="64" width="1.2" height="1.2" fill="#0a5a2a"/><rect x="182" y="66" width="1.2" height="1.2" fill="#e0401a"/><rect x="179.4" y="60" width="1.2" height="1.2" fill="#000"/><rect x="179.4" y="66" width="1.2" height="4" fill="#444"/>
<rect x="205.5" y="57.5" width="11.5" height="12.5" fill="#fbfbfb" stroke="#b8b8b8" stroke-width="1"/>
<path d="M208 59.5v7M206.8 61h1.2M208 64.5h1.2M214 59v7M212.8 60.5h1.2M214 63.5h1.2" stroke="#666" stroke-width=".9" fill="none"/>
<path d="M217.5 70l4.6 4.4" stroke="#c8861e" stroke-width="2.2" stroke-linecap="round"/>
<circle cx="213.7" cy="66.2" r="4.9" fill="url(#gl)" fill-opacity=".85" stroke="#5aa0e0" stroke-width="1.3"/>
<path d="M240.5 58.5q0 -1 1 -1h7l3 3v9q0 1 -1 1h-9q-1 0 -1 -1z" fill="#fcfcfc" stroke="#666" stroke-width="1"/>
<path d="M248.5 57.5v3h3" fill="#ddd" stroke="#666" stroke-width=".8"/>
<path d="M242.5 60h3.5M242.5 63h7M242.5 65.5h5M242.5 68h4" stroke="#777" stroke-width="1"/>
<path d="M248.5 63.199999999999996h3.4v3.8999999999999995h3.8999999999999995v3.4h-3.8999999999999995v3.8999999999999995h-3.4v-3.8999999999999995h-3.8999999999999995v-3.4h3.8999999999999995z" fill="url(#gp)" stroke="#0a7a0a" stroke-width="1"/>
<path d="M340.6 57.4l7.4 7.6l-7.4 7.6l-7.4 -7.6z" fill="#ffd84a" stroke="#e08a20" stroke-width="1.5" stroke-linejoin="round"/>
<path d="M340.6 58.8l5.8 6l-5.8 2z" fill="#fff2a8" opacity=".6"/>
<path d="M340.6 61.5v4.3M340.6 67.4v1.4" stroke="#5a3010" stroke-width="1.7"/>
<path d="M361.5 64.5h12.5l-1.2 5l-3.8 2.8h-2.5l-3.8 -2.8z" fill="#ffd23c" stroke="#e8962a" stroke-width="1"/>
<path d="M360.8 63.2q-.6 -2 2.4 -2.4q.6 -3.6 4.6 -3.6t4.8 3.4q3.6 .2 3.6 2.2q0 1.6 -7.8 2.2q-7 -.2 -7.6 -1.8z" fill="#5aa8e8" stroke="#3a86d0" stroke-width=".8"/>
<ellipse cx="367.5" cy="59.6" rx="3" ry="1.4" fill="#9fd0f8" opacity=".8"/>
<circle cx="372.8" cy="68.8" r="4" fill="#0a9a1a" stroke="#0a6a10" stroke-width=".8"/>
<path d="M371.4 66.4l3.6 2.4l-3.6 2.4z" fill="#fff"/>
<path d="M482.5 59V72.5M479.5 70.5H493" stroke="#555" stroke-width="1.3" fill="none"/>
<path d="M480.5 61.5l2 -3l2 3zM491 68.5l3 2l-3 2z" fill="#555"/>
<path d="M488.5 60v8.5M488.5 61.3h2.6M486 67.4h2.5" stroke="#0a8a1a" stroke-width="1.4" fill="none"/>
<path d="M510.5 59V72.5M507.5 70.5H521" stroke="#555" stroke-width="1.3" fill="none"/>
<path d="M508.5 61.5l2 -3l2 3zM519 68.5l3 2l-3 2z" fill="#555"/>
<path d="M516.5 57v12" stroke="#0a9a1a" stroke-width="1.3"/><rect x="514.3" y="59.5" width="4.4" height="7" fill="#5ae06a" stroke="#0a9a1a" stroke-width="1.2"/>
<path d="M538.5 59V72.5M535.5 70.5H549" stroke="#555" stroke-width="1.3" fill="none"/>
<path d="M536.5 61.5l2 -3l2 3zM547 68.5l3 2l-3 2z" fill="#555"/>
<path d="M537.3 67.6q1.6 -.4 3 -2.4q2.4 -3.6 4.6 -2.6q1.4 .6 3.6 3.4" stroke="#1a8a2a" stroke-width="1.3" fill="none"/>
<path d="M578 67.2l5.2 5" stroke="#c8901e" stroke-width="2.6" stroke-linecap="round"/>
<path d="M578.3 66.9l4.8 4.6" stroke="#ffe27a" stroke-width=".9" stroke-linecap="round"/>
<circle cx="574" cy="63" r="5.3" fill="#dbe9fb" stroke="#2a72d8" stroke-width="1.4"/>
<path d="M571 63h6" stroke="#2a7ac8" stroke-width="1.8"/>
<path d="M574 60v6" stroke="#2a7ac8" stroke-width="1.8"/>
<path d="M606 67.2l5.2 5" stroke="#c8901e" stroke-width="2.6" stroke-linecap="round"/>
<path d="M606.3 66.9l4.8 4.6" stroke="#ffe27a" stroke-width=".9" stroke-linecap="round"/>
<circle cx="602" cy="63" r="5.3" fill="#dbe9fb" stroke="#2a72d8" stroke-width="1.4"/>
<path d="M599 63h6" stroke="#2a7ac8" stroke-width="1.8"/>
<path d="M634.5 59V72.5M631.5 70.5H645" stroke="#555" stroke-width="1.3" fill="none"/>
<path d="M632.5 61.5l2 -3l2 3zM643 68.5l3 2l-3 2z" fill="#555"/>
<path d="M639.6 61l3.4 3.5l-3.4 3.5z" fill="#9fe09f" stroke="#0a8a1a" stroke-width="1.2" stroke-linejoin="round"/>
<rect x="637" y="75" width="1" height="1" fill="#e0209a"/>
<path d="M662.5 59V72.5M659.5 70.5H673" stroke="#555" stroke-width="1.3" fill="none"/>
<path d="M660.5 61.5l2 -3l2 3zM671 68.5l3 2l-3 2z" fill="#555"/>
<path d="M668.5 59v10" stroke="#0a4ab0" stroke-width="1.3"/><path d="M669.6 64.6l3 -2.2v1.5h1.8v1.4h-1.8v1.5z" fill="#c8440a"/>
<path d="M693.7 59q0 -1 1 -1h6l3 3v8q0 1 -1 1h-8q-1 0 -1 -1z" fill="#fcfcfc" stroke="#777" stroke-width="1"/>
<path d="M700.7 58v3h3" fill="#ddd" stroke="#777" stroke-width=".8"/>
<path d="M697.4 61.2q-1.6 .2 -1.4 2.6v1.4q0 1.6 1.2 1.8" stroke="#0a5a2a" stroke-width="1.1" fill="none"/>
<path d="M701.5 63.6h3.4v3.8999999999999995h3.8999999999999995v3.4h-3.8999999999999995v3.8999999999999995h-3.4v-3.8999999999999995h-3.8999999999999995v-3.4h3.8999999999999995z" fill="url(#gp)" stroke="#0a7a0a" stroke-width="1"/>
<path d="M711 64h5l-2.5 3z" fill="#000"/>
<circle cx="735" cy="65" r="7.6" fill="url(#gb)"/><circle cx="735" cy="65" r="7.6" fill="none" stroke="#0a3fa0" stroke-width=".8"/>
<circle cx="735" cy="65" r="5.3" fill="#f4f6fa" stroke="#9fb8d8" stroke-width=".6"/>
<path d="M735 61.2v4h2.8" stroke="#333" stroke-width="1.1" fill="none"/>
<path d="M746 64h5l-2.5 3z" fill="#000"/>
<rect x="762.7" y="58.7" width="14.6" height="12.6" rx="1" fill="#fff" stroke="#3a7ac8" stroke-width="1.4"/>
<rect x="763.4" y="59.4" width="13.2" height="2" fill="#6aa8e8"/>
<path d="M763.4 65.5h13.2" stroke="#6aa8e8" stroke-width=".9"/>
<path d="M764.5 64.2l2 -.2l2 -1.2l2 .6l2 -1l2 -.4" stroke="#b0301a" stroke-width="1.1" fill="none"/>
<path d="M765 69.6l2.4 -.6l2 -1l2 .8l1.8 -1.6l2 1.6" stroke="#2a8a3a" stroke-width="1" fill="none"/>
<path d="M781 64h5l-2.5 3z" fill="#000"/>
<path d="M21.2 85.2v10.6l2.6 -2.4l2.2 5l1.9 -.8l-2.2 -4.9h3.5z" fill="#484848"/>
<path d="M46 92.5h6M55 92.5h6M53.5 85v6M53.5 94v6" stroke="#555" stroke-width="1.1" fill="none" shape-rendering="crispEdges"/><rect x="53" y="92" width="1" height="1" fill="#777"/>
<path d="M87.5 86v13" stroke="#505050" stroke-width="1.2"/>
<path d="M110 92.5h12" stroke="#505050" stroke-width="1.2"/>
<path d="M138 98.8l12 -12" stroke="#505050" stroke-width="1.2"/>
<path d="M164 94.5l12 -9M167.5 99l11 -8.4" stroke="#555" stroke-width="1"/>
<path d="M166 89.5l-.8 8M169.5 87.5l-1 9.5M173 85.5l-1 8M176 84l-1 7.5" stroke="#444" stroke-width=".9"/>
<path d="M165 93h2M168 91.5h2.4M171.5 90h2.4M174.5 88h2.2" stroke="#444" stroke-width=".8"/>
<text x="175" y="100.8" font-family="Liberation Sans" font-weight="bold" font-size="6.5" fill="#333">E</text>
<path d="M193 85.5h13M193 88.5h13M193 92.5h13M193 96.5h9" stroke="#505050" stroke-width="1" stroke-dasharray="1 1" shape-rendering="crispEdges"/>
<text x="203" y="100.8" font-family="Liberation Sans" font-weight="bold" font-size="6.5" fill="#333">F</text>
<text x="223.8" y="96.8" font-family="Liberation Sans" font-size="12.5" fill="#4a4a4a" stroke="#4a4a4a" stroke-width=".4">A</text>
<rect x="250.5" y="86.5" width="11" height="12" fill="none" stroke="#555" stroke-width="1" stroke-dasharray="1 1" shape-rendering="crispEdges"/>
<rect x="249" y="85" width="2" height="2" fill="#555"/>
<path d="M252.5 89.5h7.4M256.2 89.5v7.5" stroke="#555" stroke-width="1.7" fill="none"/>
<path d="M280.6 85.6l3.6 3.2l-3.6 2.2l-3.6 -2.2z" fill="#484848"/>
<path d="M287.6 98.8l3.6 -3.2l-3.6 -2.2l-3.6 2.2z" fill="#484848"/>
<path d="M279 93.5l2 2l5 -6" stroke="#484848" stroke-width="1.2" fill="none"/>
<path d="M294 91h5l-2.5 3z" fill="#000"/>
<rect x="872" y="727" width="2" height="9" fill="#556b00"/>
<rect x="872" y="737" width="2" height="2" fill="#00264d"/>
<rect x="875" y="727" width="2" height="8" fill="#556b00"/>
<rect x="875" y="736" width="2" height="3" fill="#00264d"/>
<rect x="878" y="727" width="2" height="7" fill="#556b00"/>
<rect x="878" y="735" width="2" height="4" fill="#00264d"/>
<rect x="881" y="727" width="2" height="6" fill="#556b00"/>
<rect x="881" y="734" width="2" height="5" fill="#00264d"/>
<rect x="884" y="727" width="2" height="5" fill="#556b00"/>
<rect x="884" y="733" width="2" height="6" fill="#00264d"/>
<rect x="887" y="727" width="2" height="4" fill="#556b00"/>
<rect x="887" y="732" width="2" height="7" fill="#00264d"/>
<rect x="890" y="727" width="2" height="3" fill="#556b00"/>
<rect x="890" y="731" width="2" height="8" fill="#00264d"/>
<rect x="893" y="727" width="2" height="2" fill="#556b00"/>
<rect x="893" y="730" width="2" height="9" fill="#00264d"/>
<path d="M1016 742l12 -12M1020 742l8 -8M1024 742l4 -4" stroke="#aca899" stroke-width="1.4"/>
<path d="M1017 742l11 -11M1021 742l7 -7M1025 742l3 -3" stroke="#fff" stroke-width=".8"/>
</svg>
<div class="a menu" id="t0" style="left:30px;transform:scaleX(0.9389)">Fichier</div>
<div class="a menu" id="t1" style="left:80px;transform:scaleX(0.9743)">Affichage</div>
<div class="a menu" id="t2" style="left:141px;transform:scaleX(0.9359)">Insertion</div>
<div class="a menu" id="t3" style="left:196.5px;transform:scaleX(0.9495)">Graphiques</div>
<div class="a menu" id="t4" style="left:266.5px;transform:scaleX(0.9422)">Outils</div>
<div class="a menu" id="t5" style="left:309px;transform:scaleX(0.9361)">Fenetre</div>
<div class="a menu" id="t6" style="left:361px;transform:scaleX(0.9078)">Aide</div>
<div class="a tt" id="t7" style="left:27.5px;transform:scaleX(0.9361)">1799069: FxPro - MetaTrader 4 - Compte Démo - [AUDUSD,H1]</div>
<div class="a tb" id="t8" style="left:260.5px;top:58px;transform:scaleX(0.9764)">Nouvel ordre</div>
<div class="a tb" id="t9" style="left:382.5px;top:58px;transform:scaleX(0.9919)">Expert Advisors</div>
<div class="a tf" id="t10" style="left:320.8px;transform:scaleX(0.9748)">M1</div>
<div class="a tf" id="t11" style="left:348.7px;transform:scaleX(0.9828)">M5</div>
<div class="a tf" id="t12" style="left:374.7px;transform:scaleX(0.9991)">M15</div>
<div class="a tf" id="t13" style="left:402.8px;transform:scaleX(0.9820)">M30</div>
<div class="a tf" id="t14" style="left:433.7px;transform:scaleX(0.9813)">H1</div>
<div class="a tf" id="t15" style="left:460.8px;transform:scaleX(1.0421)">H4</div>
<div class="a tf" id="t16" style="left:489.7px;transform:scaleX(0.9813)">D1</div>
<div class="a tf" id="t17" style="left:517px;transform:scaleX(1.0593)">W1</div>
<div class="a tf" id="t18" style="left:543.8px;transform:scaleX(1.0357)">MN</div>
<div class="a cl" id="t19" style="left:13.5px;top:111.6px;transform:scaleX(0.9363)">AUDUSD,H1&nbsp; 0.99644 0.99737 0.99553 0.99553</div>
<div class="a cl" id="t20" style="left:992.4px;top:130.9px;transform:scaleX(0.8961)">1.02555</div>
<div class="a cl" id="t21" style="left:992.4px;top:162.9px;transform:scaleX(0.8961)">1.02300</div>
<div class="a cl" id="t22" style="left:992.4px;top:194.9px;transform:scaleX(0.8961)">1.02040</div>
<div class="a cl" id="t23" style="left:992.4px;top:226.9px;transform:scaleX(0.8961)">1.01785</div>
<div class="a cl" id="t24" style="left:992.4px;top:258.9px;transform:scaleX(0.8961)">1.01530</div>
<div class="a cl" id="t25" style="left:992.4px;top:290.9px;transform:scaleX(0.8961)">1.01275</div>
<div class="a cl" id="t26" style="left:992.4px;top:322.9px;transform:scaleX(0.8961)">1.01020</div>
<div class="a cl" id="t27" style="left:992.4px;top:354.9px;transform:scaleX(0.8961)">1.00760</div>
<div class="a cl" id="t28" style="left:992.4px;top:386.9px;transform:scaleX(0.8961)">1.00505</div>
<div class="a cl" id="t29" style="left:992.4px;top:418.9px;transform:scaleX(0.8961)">1.00250</div>
<div class="a cl" id="t30" style="left:992.4px;top:450.9px;transform:scaleX(0.8961)">0.99995</div>
<div class="a cl" id="t31" style="left:992.4px;top:482.9px;transform:scaleX(0.8961)">0.99735</div>
<div class="a cl" id="t32" style="left:992.4px;top:514.9px;transform:scaleX(0.8961)">0.99480</div>
<div class="a cl" id="t33" style="left:992.4px;top:546.9px;transform:scaleX(0.8961)">0.99225</div>
<div class="a cl" id="t34" style="left:992.4px;top:578.9px;transform:scaleX(0.8961)">0.98970</div>
<div class="a cl" id="t35" style="left:992.4px;top:610.9px;transform:scaleX(0.8961)">0.98715</div>
<div class="a cl" id="t36" style="left:992.4px;top:642.9px;transform:scaleX(0.8961)">0.98455</div>
<div class="a cl" id="t37" style="left:992.4px;top:674.9px;transform:scaleX(0.8961)">0.98200</div>
<div class="a cl" id="t38" style="left:992.4px;top:505px;color:#000;transform:scaleX(0.8961)">0.99553</div>
<div class="a cl" id="t39" style="left:8.4px;top:685.5px;transform:scaleX(0.8992)">13 Dec 2010</div>
<div class="a cl" id="t40" style="left:72.4px;top:685.5px;transform:scaleX(0.9244)">15 Dec 02:00</div>
<div class="a cl" id="t41" style="left:136.4px;top:685.5px;transform:scaleX(0.9244)">16 Dec 10:00</div>
<div class="a cl" id="t42" style="left:200.4px;top:685.5px;transform:scaleX(0.9244)">17 Dec 18:00</div>
<div class="a cl" id="t43" style="left:264.4px;top:685.5px;transform:scaleX(0.9244)">21 Dec 02:00</div>
<div class="a cl" id="t44" style="left:328.4px;top:685.5px;transform:scaleX(0.9244)">22 Dec 10:00</div>
<div class="a cl" id="t45" style="left:392.4px;top:685.5px;transform:scaleX(0.9244)">23 Dec 18:00</div>
<div class="a cl" id="t46" style="left:456.4px;top:685.5px;transform:scaleX(0.9244)">27 Dec 06:00</div>
<div class="a cl" id="t47" style="left:520.4px;top:685.5px;transform:scaleX(0.9244)">28 Dec 14:00</div>
<div class="a cl" id="t48" style="left:584.4px;top:685.5px;transform:scaleX(0.9244)">29 Dec 22:00</div>
<div class="a cl" id="t49" style="left:648.4px;top:685.5px;transform:scaleX(0.9244)">31 Dec 06:00</div>
<div class="a cl" id="t50" style="left:712.4px;top:685.5px;transform:scaleX(0.9280)">3 Jan 17:00</div>
<div class="a cl" id="t51" style="left:776.4px;top:685.5px;transform:scaleX(0.9280)">5 Jan 01:00</div>
<div class="a cl" id="t52" style="left:840.4px;top:685.5px;transform:scaleX(0.9280)">6 Jan 09:00</div>
<div class="a cl" id="t53" style="left:904.4px;top:685.5px;transform:scaleX(0.9280)">7 Jan 17:00</div>
<div class="a tab" id="t54" style="left:18.6px;transform:scaleX(0.9862)">EURUSD,H1</div>
<div class="a tab" id="t55" style="left:98.2px;transform:scaleX(1.0334)">USDCHF,H1</div>
<div class="a tab" id="t56" style="left:179.8px;transform:scaleX(0.9689)">GBPUSD,H1</div>
<div class="a tab" id="t57" style="left:258.4px;transform:scaleX(1.0031)">USDJPY,H1</div>
<div class="a tab" id="t58" style="left:333.5px;transform:scaleX(1.0407)">EURUSD,M2 (offline)</div>
<div class="a tab" id="t59" style="left:453.4px;transform:scaleX(1.0583)">USDCHF,M2 (offline)</div>
<div class="a tab" id="t60" style="left:575px;color:#000;transform:scaleX(0.9949)">AUDUSD,H1</div>
<div class="a st" id="t61" style="left:5px;transform:scaleX(0.9887)">Pour plus d'informations, appuyer F1</div>
<div class="a st" id="t62" style="left:312.3px;transform:scaleX(1.0126)">Default</div>
<div class="a st" id="t63" style="left:422px;transform:scaleX(1.0019)">2010.12.28 19:00</div>
<div class="a st" id="t64" style="left:522px;transform:scaleX(1.0379)">O: 1.01097</div>
<div class="a st" id="t65" style="left:594.5px;transform:scaleX(1.0218)">H: 1.01214</div>
<div class="a st" id="t66" style="left:665px;transform:scaleX(1.0288)">L: 1.01071</div>
<div class="a st" id="t67" style="left:735px;transform:scaleX(1.0374)">C: 1.01187</div>
<div class="a st" id="t68" style="left:806px;transform:scaleX(0.9996)">V: 4227</div>
<div class="a st" id="t69" style="left:926px;transform:scaleX(0.9697)">70/0 kb</div>
</body></html>
